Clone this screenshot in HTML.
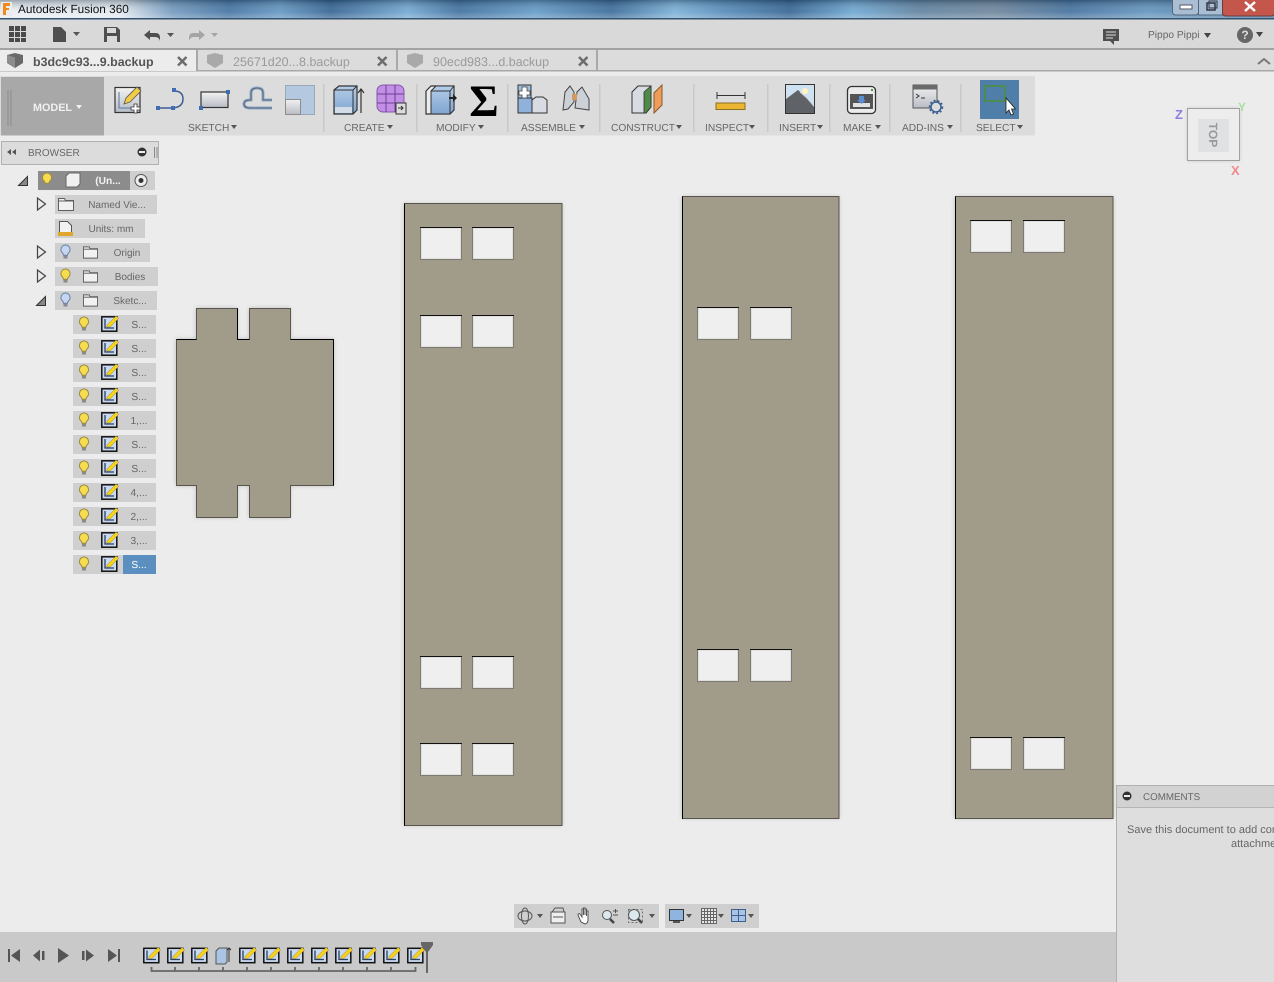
<!DOCTYPE html>
<html><head><meta charset="utf-8"><style>
html,body{margin:0;padding:0;background:#ececec;overflow:hidden}
svg{display:block}
text{font-family:"Liberation Sans",sans-serif;font-size:10.2px;fill:#666;text-rendering:geometricPrecision}
.c{text-anchor:middle}
</style></head><body>
<svg xmlns="http://www.w3.org/2000/svg" width="1274" height="982" viewBox="0 0 1274 982">
<defs>
<linearGradient id="tb" x1="0" x2="1" y1="0" y2="0">
<stop offset="0" stop-color="#e8edf2"/><stop offset=".095" stop-color="#dfe7ee"/><stop offset=".135" stop-color="#6f97bd"/><stop offset=".18" stop-color="#3f6f9f"/><stop offset=".22" stop-color="#5f93c0"/><stop offset=".26" stop-color="#2f5f90"/><stop offset=".32" stop-color="#6fa5d0"/><stop offset=".36" stop-color="#3a6c9c"/><stop offset=".42" stop-color="#5f97c4"/><stop offset=".48" stop-color="#356796"/><stop offset=".53" stop-color="#76add6"/><stop offset=".57" stop-color="#4f86b5"/><stop offset=".62" stop-color="#2f6090"/><stop offset=".67" stop-color="#6aa4d0"/><stop offset=".72" stop-color="#5b7f9f"/><stop offset=".78" stop-color="#6a8299"/><stop offset=".84" stop-color="#3f6d9b"/><stop offset=".9" stop-color="#5f91bc"/><stop offset="1" stop-color="#42719e"/>
</linearGradient>
<linearGradient id="tbv" x1="0" x2="0" y1="0" y2="1"><stop offset="0" stop-color="#123" stop-opacity=".35"/><stop offset=".6" stop-color="#fff" stop-opacity=".1"/><stop offset="1" stop-color="#fff" stop-opacity=".35"/></linearGradient>
<linearGradient id="blue" x1="0" x2="0" y1="0" y2="1"><stop offset="0" stop-color="#b5cde8"/><stop offset="1" stop-color="#7fa5d0"/></linearGradient>
<linearGradient id="gray" x1="0" x2="0" y1="0" y2="1"><stop offset="0" stop-color="#f2f2f2"/><stop offset="1" stop-color="#b8bcc4"/></linearGradient>
<filter id="sh" x="-5%" y="-5%" width="110%" height="110%"><feGaussianBlur stdDeviation="2.5"/></filter>
<symbol id="hole" width="42" height="33" viewBox="0 0 42 33">
<rect x=".5" y=".5" width="41" height="32" fill="#efefef" stroke="#7c7a72"/>
<rect x="1.500" y="1.500" width="39" height="30" fill="none" stroke="#dfdfdd"/>
<path d="M0 .5h42" stroke="#111"/>
</symbol>
<symbol id="bulbY" viewBox="0 0 12 16" overflow="visible"><path d="M6 1a4.600 4.600 0 0 0-3 8c.7.7 1 1.300 1 2.200h4c0-.9.3-1.500 1-2.200A4.600 4.600 0 0 0 6 1z" fill="#f5dc50" stroke="#a08c3c"/><rect x="4" y="11.500" width="4" height="3" fill="#8b8b80"/></symbol>
<symbol id="bulbB" viewBox="0 0 12 16" overflow="visible"><path d="M6 1a4.600 4.600 0 0 0-3 8c.7.7 1 1.300 1 2.200h4c0-.9.3-1.500 1-2.200A4.600 4.600 0 0 0 6 1z" fill="#c5d6f0" stroke="#6d82a8"/><rect x="4" y="11.500" width="4" height="3" fill="#858a94"/></symbol>
<symbol id="folder" viewBox="0 0 16 13" overflow="visible"><path d="M.5 12.500V.5h6l1 2h8v10z" fill="#f1f1f1" stroke="#5f5f5f"/><path d="M.5 3h15" stroke="#5f5f5f" fill="none"/></symbol>
<symbol id="sk" viewBox="0 0 17 16" overflow="visible"><rect x=".8" y=".8" width="15" height="14.400" fill="#c9d9ee" stroke="#111" stroke-width="1.500"/><path d="M4 3v9h9" stroke="#2a3f6a" stroke-width="1.300" fill="none"/><path d="M5.500 11l1-2.500 8.500-8.500 2.500 2.500-8.500 8.500z" fill="#f5d21e" stroke="#8a7420" stroke-width=".4"/></symbol>
</defs>

<!-- background -->
<rect width="1274" height="982" fill="#ececec"/>

<!-- title bar -->
<rect width="1274" height="19" fill="url(#tb)"/><rect width="1274" height="19" fill="url(#tbv)"/>
<rect y="18" width="1274" height="1.500" fill="#32526f"/>
<rect x="1" y="2" width="11" height="14" fill="#ececec"/>
<path d="M3 3h7v3H6v2h3v2H6v5H3z" fill="#ef8a1f"/>
<text x="18" y="13" style="font-size:11.800px;fill:#111">Autodesk Fusion 360</text>
<rect x="1172.500" y="-3" width="26" height="18" rx="3" fill="#a9bed2" stroke="#51677d"/>
<rect x="1198.500" y="-3" width="24" height="18" fill="#a9bed2" stroke="#51677d"/>
<rect x="1222.500" y="-3" width="52" height="19" rx="3" fill="#c4564c" stroke="#6c3c3c"/>
<rect x="1180" y="5" width="12" height="4" fill="#fff" stroke="#556"/>
<rect x="1207" y="3" width="8" height="7" fill="none" stroke="#334" stroke-width="1.500"/><rect x="1209" y="1" width="8" height="7" fill="none" stroke="#334"/>
<path d="M1245 2l10 9M1255 2l-10 9" stroke="#fff" stroke-width="2.500"/>

<!-- quick access bar -->
<rect y="19.500" width="1274" height="29" fill="#d9d9d9"/>
<rect y="48" width="1274" height="2" fill="#a2a2a2"/>
<g fill="#4a4a4a"><rect x="9" y="26" width="5" height="5"/><rect x="15" y="26" width="5" height="5"/><rect x="21" y="26" width="5" height="5"/><rect x="9" y="32" width="5" height="5"/><rect x="15" y="32" width="5" height="5"/><rect x="21" y="32" width="5" height="5"/><rect x="9" y="38" width="5" height="4"/><rect x="15" y="38" width="5" height="4"/><rect x="21" y="38" width="5" height="4"/></g>
<path d="M53 27h8l5 5v10H53z" fill="#4f4f4f"/><path d="M73 32h7l-3.500 4z" fill="#555"/>
<path d="M104 27h13l3 3v12h-16z" fill="#4f4f4f"/><rect x="107" y="28" width="9" height="5" fill="#d9d9d9"/><rect x="107" y="36" width="10" height="6" fill="#d9d9d9"/>
<path d="M144 35l6-5v3h6q4 0 4 5v3q-1-4-5-4h-5v3z" fill="#4f4f4f"/><path d="M167 33h7l-3.500 4z" fill="#555"/>
<path d="M205 35l-6-5v3h-6q-4 0-4 5v3q1-4 5-4h5v3z" fill="#a5a5a5"/><path d="M211 33h7l-3.500 4z" fill="#a5a5a5"/>
<path d="M1103 29h16v12h-5v4l-4-4h-7z" fill="#4f4f4f"/><path d="M1106 32h10M1106 35h10M1106 38h7" stroke="#ddd"/>
<text x="1148" y="38">Pippo Pippi</text><path d="M1204 33h7l-3.500 5z" fill="#444"/>
<circle cx="1245" cy="35" r="8" fill="#666"/><text x="1245" y="39" class="c" style="font-size:12px;font-weight:bold;fill:#ddd">?</text><path d="M1256 32h7l-3.500 5z" fill="#444"/>

<!-- tabs -->
<rect y="50" width="1274" height="20" fill="#dcdcdc"/>
<rect y="70" width="1274" height="1.500" fill="#a8a8a8"/>
<rect y="50" width="196" height="21" fill="#ececec"/>
<rect x="196" y="50" width="2" height="21" fill="#a8a8a8"/><rect x="396" y="50" width="2" height="21" fill="#a8a8a8"/><rect x="596" y="50" width="2" height="21" fill="#a8a8a8"/>
<path d="M7 55l8-2 8 2v8l-8 5-8-5z" fill="#6a6a6a"/><path d="M7 55l8 2.500v10l-8-5z" fill="#8d8d8d"/>
<g opacity=".45"><path d="M207 55l8-2 8 2v8l-8 5-8-5z" fill="#6a6a6a"/></g>
<g opacity=".45"><path d="M407 55l8-2 8 2v8l-8 5-8-5z" fill="#6a6a6a"/></g>
<text x="33" y="66" style="font-size:12.400px;font-weight:bold;fill:#555">b3dc9c93...9.backup</text>
<text x="233" y="66" style="font-size:12.500px;fill:#9a9a9a">25671d20...8.backup</text>
<text x="433" y="66" style="font-size:12.500px;fill:#9a9a9a">90ecd983...d.backup</text>
<g stroke="#6d6d6d" stroke-width="2.500"><path d="M178 57l8.500 8.500M186.500 57l-8.500 8.500M378 57l8.500 8.500M386.500 57l-8.500 8.500M579 57l8.500 8.500M587.500 57l-8.500 8.500"/></g>
<path d="M1258 64l6-5 6 5" fill="none" stroke="#777" stroke-width="2"/>

<!-- toolbar -->
<rect x="0" y="76" width="1035" height="59.500" fill="#dcdcdc"/>
<rect x="1" y="77" width="103" height="58.500" fill="#a8a8a8"/>
<path d="M8 90v36M11 90v36" stroke="#8b8b8b"/>
<text x="33" y="111" style="font-weight:bold;fill:#f0f0f0;font-size:10.800px">MODEL</text><path d="M76 105h6l-3 4z" fill="#f0f0f0"/>
<g fill="#c9c9c9"><rect x="323" y="84" width="1.500" height="48"/><rect x="416" y="84" width="1.500" height="48"/><rect x="507" y="84" width="1.500" height="48"/><rect x="599" y="84" width="1.500" height="48"/><rect x="693" y="84" width="1.500" height="48"/><rect x="767" y="84" width="1.500" height="48"/><rect x="829" y="84" width="1.500" height="48"/><rect x="889" y="84" width="1.500" height="48"/><rect x="960" y="84" width="1.500" height="48"/></g>
<g>
<text x="188" y="131">SKETCH</text><text x="344" y="131">CREATE</text><text x="436" y="131">MODIFY</text><text x="521" y="131">ASSEMBLE</text><text x="611" y="131">CONSTRUCT</text><text x="705" y="131">INSPECT</text><text x="779" y="131">INSERT</text><text x="843" y="131">MAKE</text><text x="902" y="131">ADD-INS</text><text x="976" y="131">SELECT</text>
</g>
<g fill="#555"><path d="M231 125h6l-3 4z"/><path d="M387 125h6l-3 4z"/><path d="M478 125h6l-3 4z"/><path d="M579 125h6l-3 4z"/><path d="M676 125h6l-3 4z"/><path d="M749 125h6l-3 4z"/><path d="M817 125h6l-3 4z"/><path d="M875 125h6l-3 4z"/><path d="M947 125h6l-3 4z"/><path d="M1017 125h6l-3 4z"/></g>

<!-- sketch icons -->
<rect x="115" y="87.500" width="25" height="25" fill="url(#gray)" stroke="#333" stroke-width="1.200"/>
<path d="M119 92v16h16" stroke="#4f78a8" fill="none"/>
<path d="M124 104l2-6 11-11 4 4-11 11z" fill="#f2cc44" stroke="#555" stroke-width=".8"/>
<path d="M134 104h3v3h3v3h-3v3h-3v-3h-3v-3h3z" fill="#fff" stroke="#333" stroke-width=".8"/>
<path d="M158 108h15q10-1 10-9t-9-8" fill="none" stroke="#3e5f8f" stroke-width="1.500"/>
<g fill="#3f6cb3"><rect x="156" y="106" width="4" height="4"/><rect x="171" y="106" width="4" height="4"/><rect x="172" y="88" width="4" height="4"/></g>
<rect x="201" y="92" width="27" height="15.500" fill="url(#gray)" stroke="#333" stroke-width="1.200"/>
<rect x="199" y="106" width="4" height="4" fill="#3f6cb3"/><rect x="226" y="90" width="4" height="4" fill="#3f6cb3"/>
<path d="M272 108h-22q-6 0-6-4t6-4h1v-7q0-5 6-5t6 5v7h9" fill="none" stroke="#8aa7cc" stroke-width="3"/>
<path d="M272 108h-22q-6 0-6-4t6-4h1v-7q0-5 6-5t6 5v7h9" fill="none" stroke="#555" stroke-width=".8"/>
<rect x="285.500" y="85.500" width="29" height="29" fill="#b4c8e0" stroke="#98a8b8"/><rect x="285.500" y="99.500" width="15" height="15" fill="url(#gray)" stroke="#8d8d8d"/>

<!-- create -->
<path d="M334 90l5-4h18v24l-4 4h-19z" fill="url(#blue)" stroke="#333" stroke-width="1.200"/><path d="M353 90v24M334 90h19l4-4" fill="none" stroke="#333"/><rect x="335" y="107" width="17" height="6" fill="#d3dde8"/>
<path d="M361 113V90M358 93l3-4 3 4" fill="none" stroke="#333" stroke-width="1.200"/>
<rect x="377" y="85" width="27" height="27" rx="6" fill="#c38fe6" stroke="#8458a8"/>
<path d="M377 94h27M377 103h27M386 85v27M395 85v27" stroke="#6e3f96"/>
<rect x="396" y="103" width="10" height="11" fill="#ddd" stroke="#333"/><path d="M398 108h5M401 106l2 2-2 2" stroke="#333" fill="none"/>

<!-- modify -->
<path d="M426 91l5-5h23v24l-4 4h-24z" fill="#ececec" stroke="#333" stroke-width="1.200"/><path d="M431 91l5-5h18v24l-4 4h-19z" fill="url(#blue)" stroke="#333"/><path d="M450 91v23M431 91h19l4-5" fill="none" stroke="#333"/>
<path d="M449 97h4v-3l4 4-4 4v-3h-4z" fill="#222"/>
<text x="484" y="116" class="c" style="font-size:45px;font-family:'Liberation Serif',serif;font-weight:bold;fill:#000">Σ</text>

<!-- assemble -->
<rect x="518" y="98" width="14" height="15" fill="#8fb2da" stroke="#333"/>
<path d="M532 100l4-3h7l4 3v13h-15z" fill="#d8dce2" stroke="#333"/>
<rect x="518" y="85" width="13" height="13" fill="#9fbfe0" stroke="#333"/><path d="M522 87h5v4h3v4h-3v3h-5v-3h-3v-4h3z" fill="#fff" stroke="#444" stroke-width=".8"/>
<path d="M563 110l2-18 5-6 4 6v10l-6 7zM575 108l2-16 5-5 7 12v11z" fill="#ccd1d8" stroke="#444"/><rect x="572" y="94" width="5" height="6" fill="#d29a60"/>

<!-- construct -->
<path d="M632 92l6-6h13v21l-5 6h-14z" fill="#d8dce2" stroke="#333"/><path d="M644 92l7-6v21l-5 6h-2z" fill="#4f8a48" stroke="#333" stroke-width=".8"/>
<path d="M654 113v-20l8-8v20z" fill="#ef9c59" stroke="#8a5a30"/>

<!-- inspect -->
<path d="M717 95.500h28M717 92v7M745 92v7" stroke="#333" fill="none"/>
<rect x="716" y="103" width="29" height="6.500" fill="#ecb532" stroke="#8a7020"/>

<!-- insert -->
<rect x="785.500" y="84.500" width="29" height="29" fill="#cfe2f2" stroke="#333"/>
<path d="M786 113v-14l12-9 8 7 8 10v6z" fill="#5f6368"/><path d="M800 92l7 6 7 8" stroke="#d5d9dd" fill="none"/><circle cx="805" cy="91" r="3" fill="#fff5c0"/>

<!-- make -->
<rect x="847.500" y="86.500" width="28" height="27" rx="4" fill="#ececec" stroke="#333" stroke-width="1.300"/>
<rect x="850" y="94" width="23" height="15" fill="#555"/><rect x="853" y="103" width="17" height="4" fill="#e2e2e2"/><path d="M859 96h5v4h2l-4.500 4-4.500-4h2z" fill="#5a8fd2"/><rect x="871" y="89" width="2" height="2" fill="#4a9a4a"/>

<!-- add-ins -->
<rect x="913" y="85" width="24" height="23" fill="url(#gray)" stroke="#555"/><rect x="913" y="85" width="24" height="4.500" fill="#6a6a6a"/>
<path d="M916 94l3 2-3 2M921 98h4" stroke="#333" fill="none"/>
<circle cx="936" cy="107" r="5" fill="#ddd" stroke="#3a5f90" stroke-width="1.500"/><circle cx="936" cy="107" r="6.500" fill="none" stroke="#3a5f90" stroke-width="1.500" stroke-dasharray="2 2"/>

<!-- select -->
<rect x="980" y="80" width="39" height="39" fill="#4f7fa9"/>
<rect x="985" y="86" width="20" height="15" fill="none" stroke="#4a8c52" stroke-width="2"/>
<path d="M1006 98v15l3-3 2 5 2.500-1-2-5h4z" fill="#fff" stroke="#222" stroke-width=".8"/>

<!-- viewcube -->
<rect x="1187.500" y="108.500" width="52" height="52" fill="#000" opacity=".15" filter="url(#sh)"/>
<rect x="1187.500" y="108.500" width="52" height="52" fill="#ededed" stroke="#a0a0a0"/>
<rect x="1198" y="119" width="31" height="33" fill="#dfe1e3"/>
<text transform="translate(1209 135) rotate(90)" class="c" style="font-size:12px;font-weight:bold;fill:#999">TOP</text>
<text x="1175" y="119" style="font-size:13px;font-weight:bold;fill:#8a80e0">Z</text>
<text x="1238" y="111" style="font-size:12px;font-weight:bold;fill:#a8e0a0">Y</text>
<text x="1231" y="175" style="font-size:13px;font-weight:bold;fill:#ee8a8a">X</text>

<!-- browser -->
<rect x="1.500" y="141.500" width="157" height="23" fill="#dcdcdc" stroke="#b0b0b0"/>
<path d="M11 149v6l-4-3zM16 149v6l-4-3z" fill="#555"/>
<text x="28" y="156" style="font-size:10px">BROWSER</text>
<circle cx="142" cy="152" r="4.500" fill="#333"/><rect x="139" y="151" width="6" height="2" fill="#eee"/>
<path d="M154.500 147v11M157 147v11" stroke="#888"/>

<g fill="#cfcfcf">
<rect x="38" y="171" width="117" height="19"/><rect x="55" y="195" width="102" height="19"/><rect x="55" y="219" width="90" height="19"/><rect x="55" y="243" width="95" height="19"/><rect x="55" y="267" width="103" height="19"/><rect x="55" y="291" width="102" height="19"/>
<rect x="73" y="315" width="83" height="19"/><rect x="73" y="339" width="83" height="19"/><rect x="73" y="363" width="83" height="19"/><rect x="73" y="387" width="83" height="19"/><rect x="73" y="411" width="83" height="19"/><rect x="73" y="435" width="83" height="19"/><rect x="73" y="459" width="83" height="19"/><rect x="73" y="483" width="83" height="19"/><rect x="73" y="507" width="83" height="19"/><rect x="73" y="531" width="83" height="19"/><rect x="73" y="555" width="83" height="19"/>
</g>
<rect x="38" y="171" width="92" height="19" fill="#8c8c8c"/>
<rect x="123" y="555" width="33" height="19" fill="#5a8fc0"/>
<!-- tree arrows -->
<path d="M18.500 185.500l9-9v9z" fill="#888" stroke="#333"/>
<path d="M36.500 305.500l9-9v9z" fill="#888" stroke="#333"/>
<g fill="#ececec" stroke="#444" stroke-width="1.200"><path d="M37.500 198l8 6-8 6z"/><path d="M37.500 246l8 6-8 6z"/><path d="M37.500 270l8 6-8 6z"/></g>
<!-- root icons -->
<use href="#bulbY" x="41" y="172" width="12" height="16"/>
<path d="M66 176l3-3h11v11l-3 3H66z" fill="#f0f0f0" stroke="#666"/>
<text x="108" y="184" class="c" style="font-weight:bold;fill:#f2f2f2">(Un...</text>
<circle cx="141" cy="180.500" r="6" fill="#eee" stroke="#555"/><circle cx="141" cy="180.500" r="2.500" fill="#333"/>
<!-- folders -->
<use href="#folder" x="58" y="198" width="16" height="13"/>
<path d="M59.500 221.500h8l4 4v9h-12z" fill="#f2f2f2" stroke="#555"/><rect x="58" y="232" width="15" height="4" fill="#e0a72e"/>
<use href="#bulbB" x="59.500" y="244" width="12" height="16"/>
<use href="#folder" x="83" y="246" width="15" height="13"/>
<use href="#bulbY" x="59.500" y="268" width="12" height="16"/>
<use href="#folder" x="83" y="270" width="15" height="13"/>
<use href="#bulbB" x="59.500" y="292" width="12" height="16"/>
<use href="#folder" x="83" y="294" width="15" height="13"/>
<text x="117" y="208" class="c" style="font-size:10px">Named Vie...</text>
<text x="111" y="232" class="c" style="font-size:10px">Units: mm</text>
<text x="127" y="256" class="c" style="font-size:10px">Origin</text>
<text x="130" y="280" class="c" style="font-size:10px">Bodies</text>
<text x="130" y="304" class="c" style="font-size:10px">Sketc...</text>
<!-- sketches -->
<g>
<use href="#bulbY" x="78" y="316" width="12" height="16"/><use href="#sk" x="101" y="316" width="17" height="16"/><text x="139" y="328" class="c">S...</text>
<use href="#bulbY" x="78" y="340" width="12" height="16"/><use href="#sk" x="101" y="340" width="17" height="16"/><text x="139" y="352" class="c">S...</text>
<use href="#bulbY" x="78" y="364" width="12" height="16"/><use href="#sk" x="101" y="364" width="17" height="16"/><text x="139" y="376" class="c">S...</text>
<use href="#bulbY" x="78" y="388" width="12" height="16"/><use href="#sk" x="101" y="388" width="17" height="16"/><text x="139" y="400" class="c">S...</text>
<use href="#bulbY" x="78" y="412" width="12" height="16"/><use href="#sk" x="101" y="412" width="17" height="16"/><text x="139" y="424" class="c">1,...</text>
<use href="#bulbY" x="78" y="436" width="12" height="16"/><use href="#sk" x="101" y="436" width="17" height="16"/><text x="139" y="448" class="c">S...</text>
<use href="#bulbY" x="78" y="460" width="12" height="16"/><use href="#sk" x="101" y="460" width="17" height="16"/><text x="139" y="472" class="c">S...</text>
<use href="#bulbY" x="78" y="484" width="12" height="16"/><use href="#sk" x="101" y="484" width="17" height="16"/><text x="139" y="496" class="c">4,...</text>
<use href="#bulbY" x="78" y="508" width="12" height="16"/><use href="#sk" x="101" y="508" width="17" height="16"/><text x="139" y="520" class="c">2,...</text>
<use href="#bulbY" x="78" y="532" width="12" height="16"/><use href="#sk" x="101" y="532" width="17" height="16"/><text x="139" y="544" class="c">3,...</text>
<use href="#bulbY" x="78" y="556" width="12" height="16"/><use href="#sk" x="101" y="556" width="17" height="16"/><text x="139" y="568" class="c" style="fill:#fff">S...</text>
</g>

<!-- plates -->
<g fill="#000" opacity=".2" filter="url(#sh)">
<path d="M176 339h20v-31h41v31h12v-31h41v31h43.500v146.500H290v32h-41v-32h-12v32h-41v-32h-20z"/>
<rect x="404" y="204" width="158" height="621"/><rect x="682" y="197" width="157" height="621"/><rect x="955" y="197" width="158" height="621"/>
</g>
<g fill="#a19b89" stroke="#57554d" stroke-width="1">
<path d="M176.500 339.500h20v-31h41v31h12v-31h41v31h43v146h-43v32h-41v-32h-12v32h-41v-32h-20z"/>
<rect x="404.500" y="203.500" width="157.500" height="622"/>
<rect x="682.500" y="196.500" width="156.500" height="622"/>
<rect x="955.500" y="196.500" width="157.500" height="622"/>
</g>
<path d="M404.500 826V203.500M176.500 339.500h20M237.500 308.500v31h12M290.500 339.500h43v146M682.500 819V196.500M955.500 819V196.500" fill="none" stroke="#000"/>
<use href="#hole" x="420" y="227"/><use href="#hole" x="472" y="227"/>
<use href="#hole" x="420" y="315"/><use href="#hole" x="472" y="315"/>
<use href="#hole" x="420" y="656"/><use href="#hole" x="472" y="656"/>
<use href="#hole" x="420" y="743"/><use href="#hole" x="472" y="743"/>
<use href="#hole" x="697" y="307"/><use href="#hole" x="750" y="307"/>
<use href="#hole" x="697" y="649"/><use href="#hole" x="750" y="649"/>
<use href="#hole" x="970" y="220"/><use href="#hole" x="1023" y="220"/>
<use href="#hole" x="970" y="737"/><use href="#hole" x="1023" y="737"/>

<!-- nav bar -->
<rect x="514" y="904" width="145" height="24" fill="#cfcfcf"/>
<rect x="665" y="904" width="94" height="24" fill="#cfcfcf"/>
<g fill="none" stroke="#555">
<ellipse cx="525" cy="916" rx="7" ry="5"/><ellipse cx="525" cy="916" rx="3.500" ry="8"/>
<rect x="551" y="912" width="14" height="11" fill="#eee"/><path d="M553 917h10M552 912l3-4h8l1 4"/>
<path d="M581 922l-3-7q0-2 2-1l2 3v-8h1.500v6-7h1.500v7-6h1.500v7-5h1.500v9q0 3-3 4z" fill="#fff"/>
<circle cx="607" cy="915" r="4.500" fill="#dbe8ee"/><path d="M610 919l4 4" stroke-width="2.500" stroke="#444"/><path d="M613 911h5M615.500 909v4M613 915h5"/>
<circle cx="634" cy="915" r="5.500" fill="#dbe8ee"/><path d="M638 919l4 4" stroke-width="2.500" stroke="#444"/><rect x="628.500" y="909.500" width="14" height="13" stroke-dasharray="2 2" stroke-width=".8"/>
</g>
<rect x="669.500" y="909.500" width="14" height="11" fill="#8fb4dd" stroke="#333"/><rect x="673" y="921" width="7" height="2" fill="#555"/>
<g stroke="#666" fill="#e8e8e8"><rect x="701.500" y="908.500" width="15" height="15"/><path d="M704.500 908.500v15M707.500 908.500v15M710.500 908.500v15M713.500 908.500v15M701.500 911.500h15M701.500 914.500h15M701.500 917.500h15M701.500 920.500h15" fill="none"/></g>
<g fill="#a8c3e3" stroke="#3f5f90"><rect x="731.500" y="909.500" width="7" height="6"/><rect x="738.500" y="909.500" width="7" height="6"/><rect x="731.500" y="915.500" width="7" height="6"/><rect x="738.500" y="915.500" width="7" height="6"/></g>
<g fill="#555"><path d="M537 914h6l-3 4z"/><path d="M649 914h6l-3 4z"/><path d="M686 914h6l-3 4z"/><path d="M718 914h6l-3 4z"/><path d="M748 914h6l-3 4z"/></g>

<!-- timeline -->
<rect y="932" width="1117" height="50" fill="#c9c9c9"/>
<g fill="#555">
<rect x="8" y="949" width="2" height="13"/><path d="M20 949v13l-9-6.500z"/>
<path d="M33 955.500l7-6v12z"/><rect x="42" y="951" width="2.500" height="9"/>
<path d="M58 948v15l11-7.500z"/>
<rect x="82" y="951" width="2.500" height="9"/><path d="M94 955.500l-8-6v12z"/>
<rect x="118" y="949" width="2" height="13"/><path d="M108 949v13l9-6.500z"/>
</g>
<use href="#sk" x="143" y="947.500" width="17" height="16"/><use href="#sk" x="167" y="947.500" width="17" height="16"/><use href="#sk" x="191" y="947.500" width="17" height="16"/>
<path d="M216 951l3-3h8v14l-2 2h-9z" fill="#a9c4e4" stroke="#555"/><path d="M229 962v-14M227 950l2-2 2 2" fill="none" stroke="#333"/>
<use href="#sk" x="239" y="947.500" width="17" height="16"/><use href="#sk" x="263" y="947.500" width="17" height="16"/><use href="#sk" x="287" y="947.500" width="17" height="16"/><use href="#sk" x="311" y="947.500" width="17" height="16"/><use href="#sk" x="335" y="947.500" width="17" height="16"/><use href="#sk" x="359" y="947.500" width="17" height="16"/><use href="#sk" x="383" y="947.500" width="17" height="16"/><use href="#sk" x="407" y="947.500" width="17" height="16"/>
<path d="M151.500 967v4H415.500V967M175 967v4M199 967v4M223 967v4M247 967v4M271 967v4M295 967v4M319 967v4M343 967v4M367 967v4M391 967v4" fill="none" stroke="#666" stroke-width="1.800"/>
<path d="M421 942h12v3l-5 7v21h-2v-21l-5-7z" fill="#666"/>

<!-- comments -->
<rect x="1116.500" y="785.500" width="158" height="197" fill="#dedede" stroke="#b0b0b0"/>
<rect x="1117" y="786" width="157" height="22" fill="#d2d2d2"/>
<rect x="1117" y="807" width="157" height="1" fill="#b5b5b5"/>
<circle cx="1127" cy="796" r="4.500" fill="#333"/><rect x="1124" y="795" width="6" height="2" fill="#eee"/>
<text x="1143" y="800" style="font-size:9.800px">COMMENTS</text>
<text x="1127" y="833" style="font-size:11px">Save this document to add comments and</text>
<text x="1231" y="847" style="font-size:11px">attachments.</text>
</svg>
</body></html>
